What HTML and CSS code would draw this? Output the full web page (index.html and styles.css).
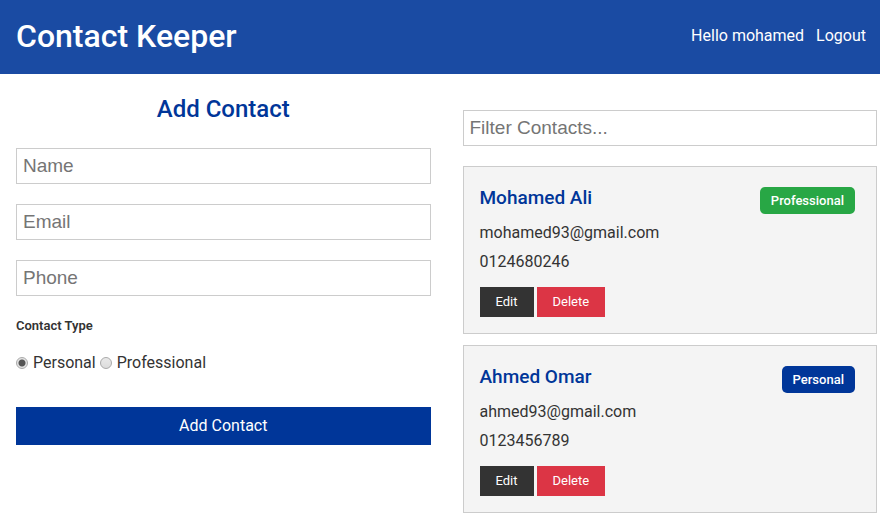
FILE: index.html
```html
<!DOCTYPE html>
<html lang="en">
<head>
<meta charset="utf-8">
<title>Contact Keeper</title>
<link rel="stylesheet" href="styles.css">
</head>
<body>
<header class="navbar">
  <h1>Contact Keeper</h1>
  <nav class="nav-links"><span>Hello mohamed</span><a href="#">Logout</a></nav>
</header>
<main class="container">
  <form class="contact-form">
    <h2>Add Contact</h2>
    <input class="field" type="text" placeholder="Name" aria-label="Name">
    <input class="field" type="email" placeholder="Email" aria-label="Email">
    <input class="field" type="text" placeholder="Phone" aria-label="Phone">
    <h5>Contact Type</h5>
    <div class="types">
      <input type="radio" id="personal" name="type" checked><label for="personal">Personal</label>
      <input type="radio" id="professional" name="type"><label for="professional">Professional</label>
    </div>
    <button class="btn btn-block" type="button">Add Contact</button>
  </form>
  <section class="contacts">
    <input class="field" type="text" placeholder="Filter Contacts..." aria-label="Filter Contacts">
    <article class="card">
      <div class="card-head"><h3>Mohamed Ali</h3><span class="badge badge-success">Professional</span></div>
      <ul><li>mohamed93@gmail.com</li><li>0124680246</li></ul>
      <div class="actions"><button class="btn btn-sm btn-dark" type="button">Edit</button><button class="btn btn-sm btn-danger" type="button">Delete</button></div>
    </article>
    <article class="card">
      <div class="card-head"><h3>Ahmed Omar</h3><span class="badge">Personal</span></div>
      <ul><li>ahmed93@gmail.com</li><li>0123456789</li></ul>
      <div class="actions"><button class="btn btn-sm btn-dark" type="button">Edit</button><button class="btn btn-sm btn-danger" type="button">Delete</button></div>
    </article>
  </section>
</main>
</body>
</html>
```
FILE: styles.css
```css
* { box-sizing: border-box; margin: 0; padding: 0; }
body { font: 16px/26px Roboto, sans-serif; color: #333; background: #fff; }
h1, h2, h3 { font-weight: 500; }
.navbar { display: flex; align-items: center; justify-content: space-between; padding: 17px 14px 19px 16px; background: #1a4ba3; color: #fff; }
.navbar h1 { font-size: 32px; line-height: 38px; }
.nav-links { display: flex; gap: 12px; }
.nav-links a { color: inherit; text-decoration: none; }
.container { display: grid; grid-template-columns: 1fr 1fr; gap: 32px; padding: 16px 3px 0 16px; }
.contact-form { display: flex; flex-direction: column; }
.contact-form h2 { font-size: 24px; line-height: 38px; text-align: center; color: #003699; }
.field { width: 100%; height: 36px; padding: 0 6px; border: 1px solid #ccc; border-radius: 0; font: 19px "Liberation Sans", sans-serif; color: #333; }
.field::placeholder { color: #757575; opacity: 1; }
.contact-form .field { margin-top: 20px; }
h5 { margin-top: 17px; font-size: 13px; font-weight: 600; }
.types { display: flex; align-items: center; margin-top: 11px; }
.types input { appearance: none; width: 12px; height: 12px; border: 1px solid #aaa; border-radius: 50%; background: linear-gradient(#e9e9e9, #dcdcdc); }
.types input:checked { background: radial-gradient(circle, #555 0 3px, #e4e4e4 4px); }
.types label { margin: 0 4px 0 5px; }
.btn { border: 0; color: #fff; background: #003699; font: 16px/22px Roboto, sans-serif; }
.btn-block { margin-top: 31px; height: 38px; }
.contacts { padding-top: 20px; }
.contacts .field { margin-bottom: 20px; }
.card { padding: 16px; border: 1px solid #ccc; background: #f4f4f4; }
.card + .card { margin-top: 11px; }
.card-head { display: flex; justify-content: space-between; padding-right: 5px; }
.card h3 { font-size: 19px; line-height: 30px; color: #003699; }
.badge { height: 27px; margin-top: 4px; padding: 0 11px; border-radius: 5px; background: #003699; color: #fff; font-size: 13px; line-height: 27px; font-weight: 500; }
.badge-success { background: #28a745; }
ul { list-style: none; margin-top: 6px; }
li { margin-bottom: 3px; }
.actions { display: flex; gap: 3px; margin-top: 12px; }
.btn-sm { height: 30px; padding: 0 16px 1px; font-size: 13px; }
.btn-dark { background: #333; }
.btn-danger { background: #dc3545; }
```
